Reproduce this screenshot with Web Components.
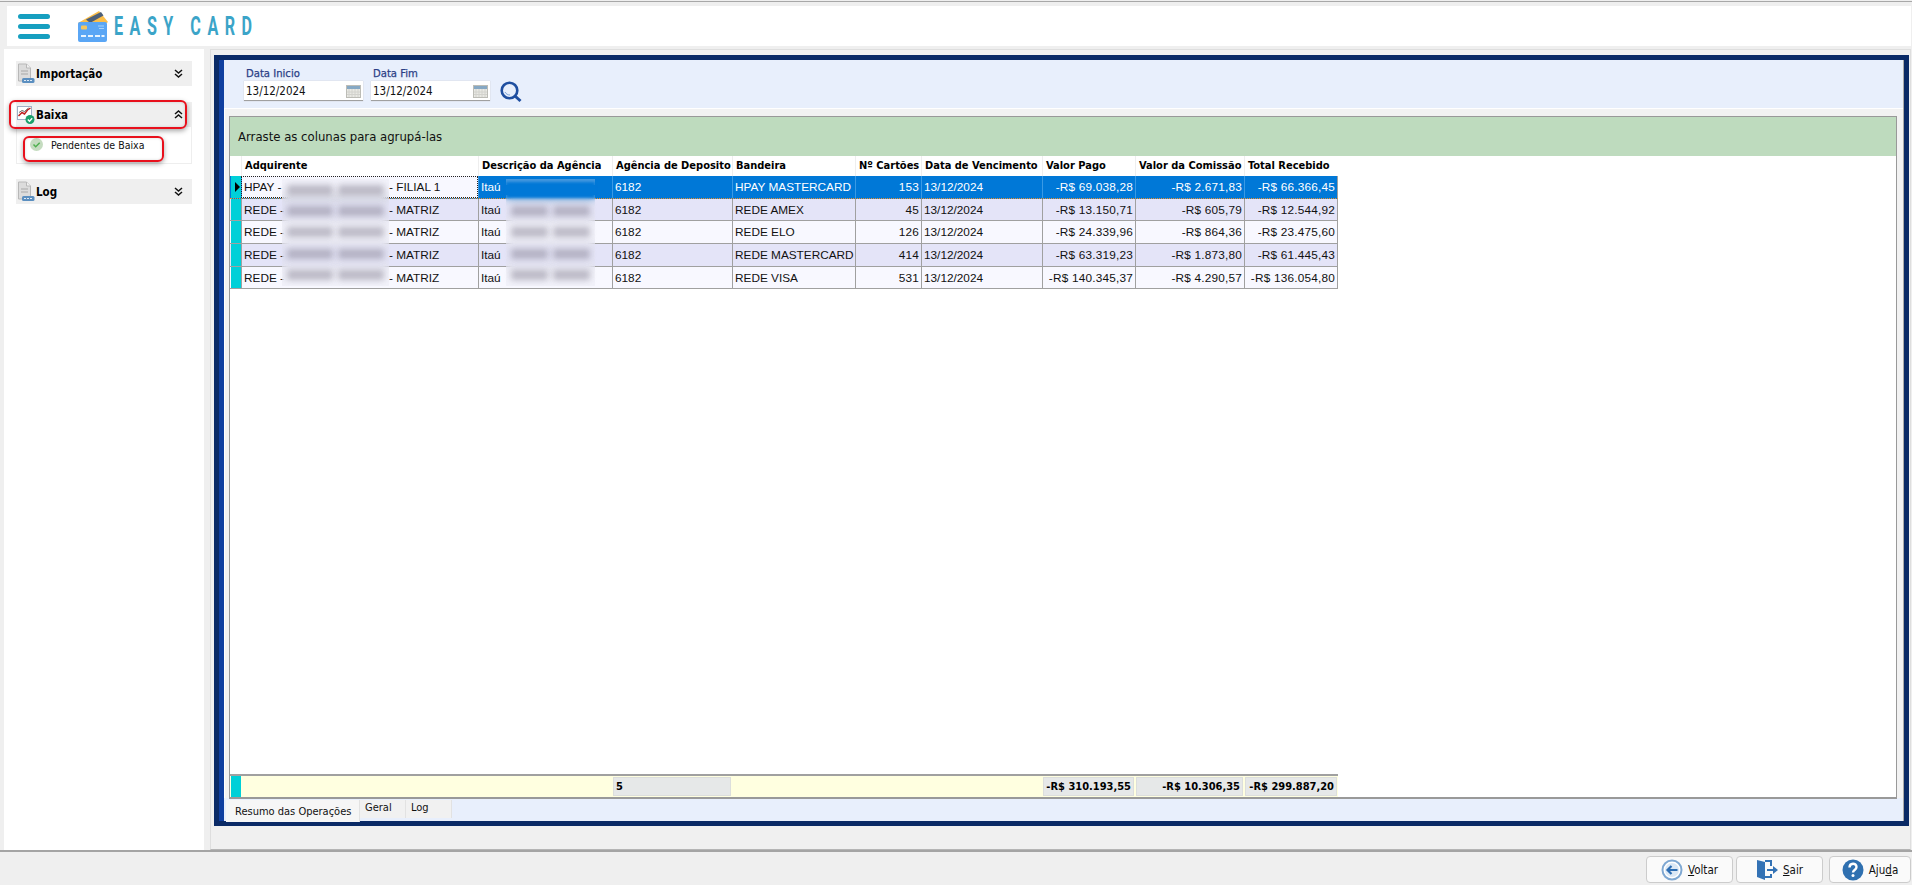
<!DOCTYPE html>
<html lang="pt-BR">
<head>
<meta charset="utf-8">
<title>Easy Card</title>
<style>
    html, body {
        margin: 0;
        padding: 0;
        height: 885px;
        overflow: hidden;
    }

    body {
        width: 1912px;
        background: #efefef;
        font-family: "DejaVu Sans Condensed", "Noto Sans", sans-serif;
        display: flex;
        flex-direction: column;
    }

    .main {
        display: flex;
        height: 801px;
        padding-left: 4px;
        box-sizing: border-box;
    }
</style>
</head>
<body>
<ec-header></ec-header>
<div class="main">
    <ec-sidebar></ec-sidebar>
    <ec-content></ec-content>
</div>
<ec-actions></ec-actions>

<script>
const ICON_DOC = `<svg width="18" height="21" viewBox="0 0 18 21"><path d="M1.500 1h8l4 4v13h-12z" fill="#dcdcdc" stroke="#b8b8b8"/><path d="M9.500 1v4h4" fill="#f2f2f2" stroke="#b8b8b8"/><path d="M4 8h7M4 11h7" stroke="#a8a8a8"/><rect x="5" y="15" width="12.500" height="5" rx="1.500" fill="#5b8fc0"/><path d="M7 17.500h8" stroke="#dfeaf5" stroke-dasharray="2 1"/></svg>`;

const ICON_CHART = `<svg width="18" height="21" viewBox="0 0 18 21"><rect x=".5" y="2.500" width="14" height="13" fill="#fff" stroke="#9fb0c6"/><path d="M1.500 12l3.500-3.500 2.500 1.500 3-4 3-2" fill="none" stroke="#c02020" stroke-width="1.500"/><path d="M2 8.500l3-2 2.500 1 4-3.500" fill="none" stroke="#444" stroke-width=".8"/><circle cx="13" cy="15.500" r="4.500" fill="#1aa06a"/><path d="M10.800 15.500l1.700 1.800 2.700-3" fill="none" stroke="#fff" stroke-width="1.300"/></svg>`;

const CHEVRON_DOWN = `<svg width="9" height="9" viewBox="0 0 9 9" fill="none" stroke="#111" stroke-width="1.500"><path d="M1 1l3.500 3L8 1M1 5l3.500 3L8 5"/></svg>`;
const CHEVRON_UP = `<svg width="9" height="9" viewBox="0 0 9 9" fill="none" stroke="#111" stroke-width="1.500"><path d="M1 4l3.500-3L8 4M1 8l3.500-3L8 8"/></svg>`;

const ICON_CALENDAR = `<svg width="15" height="14" viewBox="0 0 15 14"><rect x=".5" y="1.500" width="14" height="12" fill="#e9e9e4" stroke="#bcbcb6"/><rect x="1" y="2" width="13" height="3" fill="#86a8c4"/><path d="M3 5v8M6 5v8M9 5v8M12 5v8M1 8h13M1 10.500h13" stroke="#d2d2cd"/></svg>`;

class EcHeader extends HTMLElement {
    constructor() {
        super();
        this.shadow = this.attachShadow({mode: 'open'});
    }

    connectedCallback() {
        this.shadow.innerHTML = `
            <style>
                :host {
                    display: block;
                    border-top: 1px solid #a8a8a8;
                    margin-top: 1px;
                    padding: 4px 1px 3px 7px;
                }

                .bar {
                    height: 40px;
                    background: #fff;
                    display: flex;
                    align-items: center;
                }

                .menu {
                    width: 32px;
                    margin-left: 11px;
                    display: flex;
                    flex-direction: column;
                    gap: 5px;
                }

                .menu i {
                    height: 5px;
                    border-radius: 3px;
                    background: #169fc0;
                }

                .logo {
                    margin-left: 27px;
                }

                .name {
                    display: inline-block;
                    margin-left: 5px;
                    font: 700 26px "Roboto", sans-serif;
                    letter-spacing: 10.500px;
                    color: #3ba4c8;
                    white-space: pre;
                    transform: scaleX(.62);
                    transform-origin: left center;
                }
            </style>
            <div class="bar">
                <div class="menu"><i></i><i></i><i></i></div>
                <svg class="logo" width="32" height="33" viewBox="0 0 32 33">
                    <path d="M1 13L22 1l9 11-8 6H4z" fill="#fbbe4a"/>
                    <path d="M9 9.500L24 2l2.500 3.500L13 13z" fill="#4d5f78"/>
                    <rect x="1" y="12" width="29" height="20" rx="2" fill="#5aa6f5"/>
                    <rect x="4" y="15.500" width="6" height="4" rx="1" fill="#f6c65c"/>
                    <path d="M21 16h6M22 18.500h5" stroke="#a8d3fb" stroke-width="1.200"/>
                    <path d="M4 26h5M11 26h5M18 26h5M24.500 26h3" stroke="#e8f4ff" stroke-width="2"/>
                </svg>
                <span class="name">EASY CARD</span>
            </div>
        `;
    }
}

class EcGroup extends HTMLElement {
    constructor() {
        super();
        this.shadow = this.attachShadow({mode: 'open'});
    }

    connectedCallback() {
        const open = this.hasAttribute('open');
        const icon = this.getAttribute('icon') === 'chart' ? ICON_CHART : ICON_DOC;
        this.shadow.innerHTML = `
            <style>
                :host {
                    display: block;
                    font-size: 11px;
                    color: #000;
                }

                .head {
                    height: 25px;
                    background: #efefef;
                    display: flex;
                    align-items: center;
                    padding: 0 9px 0 1px;
                }

                .head b {
                    margin-left: 1px;
                    flex: 1;
                    font-size: 11.500px;
                }

                .body {
                    border: 1px solid #eee;
                    border-top: 0;
                    height: 37px;
                    box-sizing: border-box;
                }
            </style>
            <div class="head">${icon}<b>${this.getAttribute('label')}</b>${open ? CHEVRON_UP : CHEVRON_DOWN}</div>
            ${open ? '<div class="body"><slot></slot></div>' : ''}
        `;
    }
}

class EcSidebar extends HTMLElement {
    constructor() {
        super();
        this.shadow = this.attachShadow({mode: 'open'});
    }

    connectedCallback() {
        this.shadow.innerHTML = `
            <style>
                :host {
                    display: block;
                    flex: none;
                    width: 200px;
                    margin-right: 6px;
                    background: #fff;
                    box-sizing: border-box;
                    padding: 12px 0 0 12px;
                    position: relative;
                }

                .groups {
                    width: 176px;
                    display: flex;
                    flex-direction: column;
                }

                .item {
                    display: flex;
                    align-items: center;
                    gap: 8px;
                    padding: 0 0 0 13px;
                    height: 36px;
                    font-size: 10.500px;
                    color: #111;
                }

                .ok {
                    width: 13px;
                    height: 13px;
                    flex: none;
                    margin-top: -2px;
                }

                .mark {
                    position: absolute;
                    box-sizing: border-box;
                    border: 2px solid #e8101c;
                    border-radius: 6px;
                    box-shadow: 0 2px 5px rgba(0, 0, 0, .35), inset 0 0 3px rgba(0, 0, 0, .15);
                }

                .mark.one {
                    left: 5px;
                    top: 51px;
                    width: 178px;
                    height: 29px;
                }

                .mark.two {
                    left: 19px;
                    top: 87px;
                    width: 141px;
                    height: 26px;
                }
            </style>
            <div class="groups">
                <ec-group label="Importação" icon="doc"></ec-group>
                <ec-group label="Baixa" icon="chart" open style="margin-top: 16px">
                    <div class="item">
                        <svg class="ok" viewBox="0 0 13 13"><circle cx="6.500" cy="6.500" r="6.500" fill="#c5dcc0"/><path d="M3.500 6.500l2.200 2.200 4-4" fill="none" stroke="#4fb04f" stroke-width="1.500"/></svg>
                        Pendentes de Baixa
                    </div>
                </ec-group>
                <ec-group label="Log" icon="doc" style="margin-top: 15px"></ec-group>
            </div>
            <div class="mark one"></div>
            <div class="mark two"></div>
        `;
    }
}

class EcDateField extends HTMLElement {
    constructor() {
        super();
        this.shadow = this.attachShadow({mode: 'open'});
    }

    connectedCallback() {
        this.shadow.innerHTML = `
            <style>
                :host {
                    display: block;
                    width: 119px;
                }

                label {
                    display: block;
                    height: 21px;
                    padding: 7px 0 0 2px;
                    box-sizing: border-box;
                    font-size: 11.200px;
                    -webkit-text-stroke: .25px #2b3f86;
                    color: #2b3f86;
                    line-height: 14px;
                }

                .input {
                    height: 20px;
                    background: #fff;
                    border-bottom: 1px solid #a0a0a0;
                    box-shadow: 0 0 1px #bbb;
                    box-sizing: border-box;
                    display: flex;
                    align-items: center;
                    justify-content: space-between;
                    padding: 0 2px 0 2px;
                    font-size: 11.500px;
                    color: #111;
                }
            </style>
            <label>${this.getAttribute('label')}</label>
            <div class="input"><span>${this.getAttribute('value')}</span>${ICON_CALENDAR}</div>
        `;
    }
}

const ROWS = [
    ['HPAY', 'FILIAL 1', 'HPAY MASTERCARD', '153', '-R$ 69.038,28', '-R$ 2.671,83', '-R$ 66.366,45'],
    ['REDE', 'MATRIZ', 'REDE AMEX', '45', '-R$ 13.150,71', '-R$ 605,79', '-R$ 12.544,92'],
    ['REDE', 'MATRIZ', 'REDE ELO', '126', '-R$ 24.339,96', '-R$ 864,36', '-R$ 23.475,60'],
    ['REDE', 'MATRIZ', 'REDE MASTERCARD', '414', '-R$ 63.319,23', '-R$ 1.873,80', '-R$ 61.445,43'],
    ['REDE', 'MATRIZ', 'REDE VISA', '531', '-R$ 140.345,37', '-R$ 4.290,57', '-R$ 136.054,80']
];

class EcGrid extends HTMLElement {
    constructor() {
        super();
        this.shadow = this.attachShadow({mode: 'open'});
    }

    connectedCallback() {
        const rows = ROWS.map((r, i) => `
            <div class="row ${i === 0 ? 'selected' : ''} ${i % 2 ? 'even' : 'odd'}">
                <div class="ind">${i === 0 ? '<i></i>' : ''}</div>
                <div class="c first"><span class="pre">${r[0]} -</span><span>- ${r[1]}</span></div>
                <div class="c">Itaú</div>
                <div class="c">6182</div>
                <div class="c">${r[2]}</div>
                <div class="c num">${r[3]}</div>
                <div class="c">13/12/2024</div>
                <div class="c num">${r[4]}</div>
                <div class="c num">${r[5]}</div>
                <div class="c num">${r[6]}</div>
            </div>
        `).join('');

        const blobs = ROWS.map(() => '<div class="blob-row"><i></i><i></i></div>').join('');

        this.shadow.innerHTML = `
            <style>
                :host {
                    display: flex;
                    flex-direction: column;
                    height: 683px;
                    margin: 7px 6px 0 4px;
                    border: 1px solid #999;
                    border-width: 1px 1px 2px 1px;
                    box-sizing: border-box;
                    background: #fff;
                    position: relative;
                    font-family: "Liberation Sans", sans-serif;
                    font-size: 11.800px;
                    color: #111;
                    --cols: 11px 237px 134px 120px 123px 66px 121px 93px 109px 94px;
                }

                .group-bar {
                    height: 39px;
                    flex: none;
                    background: #bedbbe;
                    display: flex;
                    align-items: center;
                    padding-left: 8px;
                    font-family: "DejaVu Sans Condensed", "Noto Sans", sans-serif;
                    font-size: 13px;
                }

                .head, .row, .foot {
                    display: grid;
                    grid-template-columns: var(--cols);
                    width: 1108px;
                }

                .head {
                    height: 20px;
                    flex: none;
                    align-items: center;
                    font-family: "DejaVu Sans Condensed", "Noto Sans", sans-serif;
                    font-weight: 700;
                    font-size: 11px;
                    color: #000;
                    box-sizing: border-box;
                }

                .head span {
                    padding-left: 3px;
                    white-space: nowrap;
                    border-left: 1px solid #eee;
                    height: 100%;
                    line-height: 20px;
                    overflow: hidden;
                }

                .row {
                    height: 22.700px;
                    border-bottom: 1px solid #a0a0a0;
                    box-sizing: border-box;
                }

                .row.odd { background: #f8f8ff; }
                .row.even { background: #e4e4f8; }

                .c {
                    border-left: 1px solid #a0a0a0;
                    padding: 0 2px;
                    display: flex;
                    align-items: center;
                    white-space: pre;
                    overflow: hidden;
                }

                .row .c:last-child {
                    border-right: 1px solid #a0a0a0;
                }

                .num {
                    justify-content: flex-end;
                    letter-spacing: .2px;
                }

                .pre {
                    width: 145px;
                    flex: none;
                }

                .ind {
                    background: #00d0d8;
                    margin-left: 1px;
                    display: flex;
                    align-items: center;
                    justify-content: flex-end;
                    padding-right: 1px;
                }

                .ind i {
                    width: 0;
                    height: 0;
                    border-left: 5px solid #000;
                    border-top: 5px solid transparent;
                    border-bottom: 5px solid transparent;
                }

                .selected {
                    background: #0078d7 !important;
                    color: #fff;
                    border-bottom: 1px dotted #e89030;
                }

                .selected .c {
                    border-left-color: #3a9ae5;
                }

                .selected .first {
                    background: #f8f8ff;
                    color: #111;
                    outline: 1px dotted #222;
                    outline-offset: -1px;
                }

                .spacer {
                    flex: 1;
                }

                .foot {
                    flex: none;
                    height: 23px;
                    border-top: 2px solid #a0a0a0;
                    box-sizing: border-box;
                    font-family: "DejaVu Sans Condensed", "Noto Sans", sans-serif;
                    font-weight: 700;
                    font-size: 11px;
                    background: #ffffe0;
                    color: #000;
                    grid-template-columns: 11px 371px 120px 123px 66px 121px 93px 109px 94px;
                }

                .foot .cell {
                    background: #e6e8e8;
                    border: 1px solid #dcdedc;
                    margin: 1px;
                    display: flex;
                    align-items: center;
                    justify-content: flex-end;
                    padding: 0 2px;
                    white-space: nowrap;
                }

                .foot .cell.left {
                    justify-content: flex-start;
                }

                .blur {
                    position: absolute;
                    top: 62px;
                    height: 107px;
                    display: flex;
                    flex-direction: column;
                    justify-content: space-around;
                    backdrop-filter: blur(4px);
                    background: rgba(228, 228, 240, .3);
                }

                .blur.a { left: 52px; width: 107px; }
                .blur.b { left: 276px; width: 89px; }

                .blob-row {
                    display: flex;
                    gap: 5px;
                    padding: 0 5px;
                    height: 10px;
                }

                .blob-row i {
                    flex: 1;
                    background: rgba(110, 105, 125, .42);
                    filter: blur(3px);
                }

                .blur.b .blob-row:first-child {
                    padding: 0;
                    background: #0078d7;
                    box-shadow: 0 -3px 3px #0078d7, 0 3px 3px #0078d7;
                }

                .blur.b .blob-row:first-child i {
                    background: transparent;
                }
            </style>
            <div class="group-bar">Arraste as colunas para agrupá-las</div>
            <div class="head">
                <span style="border:0"></span>
                <span>Adquirente</span>
                <span>Descrição da Agência</span>
                <span>Agência de Deposito</span>
                <span>Bandeira</span>
                <span>Nº Cartões</span>
                <span>Data de Vencimento</span>
                <span>Valor Pago</span>
                <span>Valor da Comissão</span>
                <span>Total Recebido</span>
            </div>
            ${rows}
            <div class="spacer"></div>
            <div class="foot">
                <div class="ind"></div>
                <div></div>
                <div class="cell left">5</div>
                <div></div>
                <div></div>
                <div></div>
                <div class="cell">-R$ 310.193,55</div>
                <div class="cell">-R$ 10.306,35</div>
                <div class="cell">-R$ 299.887,20</div>
            </div>
            <div class="blur a">${blobs}</div>
            <div class="blur b">${blobs}</div>
        `;
    }
}

class EcTabs extends HTMLElement {
    constructor() {
        super();
        this.shadow = this.attachShadow({mode: 'open'});
    }

    connectedCallback() {
        this.shadow.innerHTML = `
            <style>
                :host {
                    display: flex;
                    height: 24px;
                    padding-left: 2px;
                    font-size: 11px;
                    color: #111;
                }

                div {
                    box-sizing: border-box;
                    background: #f1f1f1;
                    border-right: 1px solid #e2e2e2;
                    margin-top: 2px;
                    height: 18px;
                    line-height: 16px;
                    padding-left: 5px;
                }

                .active {
                    width: 134px;
                    height: 22px;
                    line-height: 24px;
                    background: #f6f6f6;
                    padding-left: 9px;
                }

                .tab {
                    width: 46px;
                }
            </style>
            <div class="active">Resumo das Operações</div>
            <div class="tab">Geral</div>
            <div class="tab">Log</div>
        `;
    }
}

class EcContent extends HTMLElement {
    constructor() {
        super();
        this.shadow = this.attachShadow({mode: 'open'});
    }

    connectedCallback() {
        this.shadow.innerHTML = `
            <style>
                :host {
                    display: block;
                    flex: 1;
                    border: 1px solid #dedede;
                    border-bottom-color: #b5b5b5;
                    margin-right: 1px;
                    padding: 5px 1px 18px 3px;
                    box-sizing: border-box;
                    background: #f0f0f0;
                }

                .frame {
                    height: 771px;
                    box-sizing: border-box;
                    background: #0a2a66;
                    padding: 5px 5px 5px 5px;
                }

                .stripe {
                    height: 100%;
                    box-sizing: border-box;
                    border-left: 5px solid #0f3fa0;
                    border-right: 1px solid #a9a9a9;
                    background: #e8effc;
                    display: flex;
                    flex-direction: column;
                }

                .tools {
                    height: 48px;
                    flex: none;
                    display: flex;
                    gap: 8px;
                    padding-left: 20px;
                }

                .search {
                    margin: 21px 0 0 2px;
                }

                .pane {
                    height: 690px;
                    flex: none;
                    background: #f2f2f2;
                    border: 1px solid #fff;
                    border-width: 1px 0 0 1px;
                    box-sizing: border-box;
                }
            </style>
            <div class="frame">
                <div class="stripe">
                    <div class="tools">
                        <ec-date-field label="Data Inicio" value="13/12/2024"></ec-date-field>
                        <ec-date-field label="Data Fim" value="13/12/2024"></ec-date-field>
                        <svg class="search" width="22" height="22" viewBox="0 0 22 22" fill="none">
                            <circle cx="9.500" cy="9.500" r="7.800" stroke="#1f4fa0" stroke-width="2.600"/>
                            <path d="M15 15l5.500 5" stroke="#1f4fa0" stroke-width="3"/>
                            <path d="M5 11c1 2 3 3 5 3" stroke="#7ea4d6"/>
                        </svg>
                    </div>
                    <div class="pane"><ec-grid></ec-grid></div>
                    <ec-tabs></ec-tabs>
                </div>
            </div>
        `;
    }
}

class EcButton extends HTMLElement {
    constructor() {
        super();
        this.shadow = this.attachShadow({mode: 'open'});
    }

    connectedCallback() {
        this.shadow.innerHTML = `
            <style>
                :host {
                    display: flex;
                    align-items: center;
                    justify-content: center;
                    gap: 5px;
                    height: 27px;
                    box-sizing: border-box;
                    background: #fafafa;
                    border: 1px solid #ccc;
                    border-radius: 4px;
                    font-size: 11.500px;
                    color: #111;
                }

                ::slotted(svg) {
                    flex: none;
                }
            </style>
            <slot></slot>
        `;
    }
}

class EcActions extends HTMLElement {
    constructor() {
        super();
        this.shadow = this.attachShadow({mode: 'open'});
    }

    connectedCallback() {
        this.shadow.innerHTML = `
            <style>
                :host {
                    display: flex;
                    justify-content: flex-end;
                    gap: 3px;
                    border-top: 2px solid #a4a4a4;
                    padding: 4px 1px 0 0;
                }

                u { text-decoration: underline; }
            </style>
            <ec-button style="width:87px">
                <svg width="22" height="22" viewBox="0 0 22 22"><circle cx="11" cy="11" r="9.500" fill="#fff" stroke="#7fa8d2" stroke-width="2"/><circle cx="11" cy="11" r="7" fill="#dbe8f5"/><path d="M16.500 11H7M10.500 7L6.500 11l4 4" fill="none" stroke="#2c6db3" stroke-width="2.200"/></svg>
                <span><u>V</u>oltar</span>
            </ec-button>
            <ec-button style="width:87px">
                <svg width="22" height="22" viewBox="0 0 22 22"><path d="M1 1l8 2v18l-8-3z" fill="#3372b5"/><path d="M9 1h7v6h-2V3H9zM14 15h2v4H9v-2h5z" fill="#3372b5"/><path d="M11 10h6V7l5 4-5 4v-3h-6z" fill="#3372b5"/></svg>
                <span><u>S</u>air</span>
            </ec-button>
            <ec-button style="width:82px;margin-left:3px">
                <svg width="22" height="22" viewBox="0 0 22 22"><circle cx="11" cy="11" r="10.500" fill="#2f70b0"/><path d="M7.500 8.500c0-5 7-5 7-.5 0 3-3.500 3-3.500 5.500" fill="none" stroke="#fff" stroke-width="2.400"/><circle cx="11" cy="16.500" r="1.500" fill="#fff"/></svg>
                <span>Aju<u>d</u>a</span>
            </ec-button>
        `;
    }
}

customElements.define('ec-header', EcHeader);
customElements.define('ec-group', EcGroup);
customElements.define('ec-sidebar', EcSidebar);
customElements.define('ec-date-field', EcDateField);
customElements.define('ec-grid', EcGrid);
customElements.define('ec-tabs', EcTabs);
customElements.define('ec-content', EcContent);
customElements.define('ec-button', EcButton);
customElements.define('ec-actions', EcActions);
</script>
</body>
</html>
